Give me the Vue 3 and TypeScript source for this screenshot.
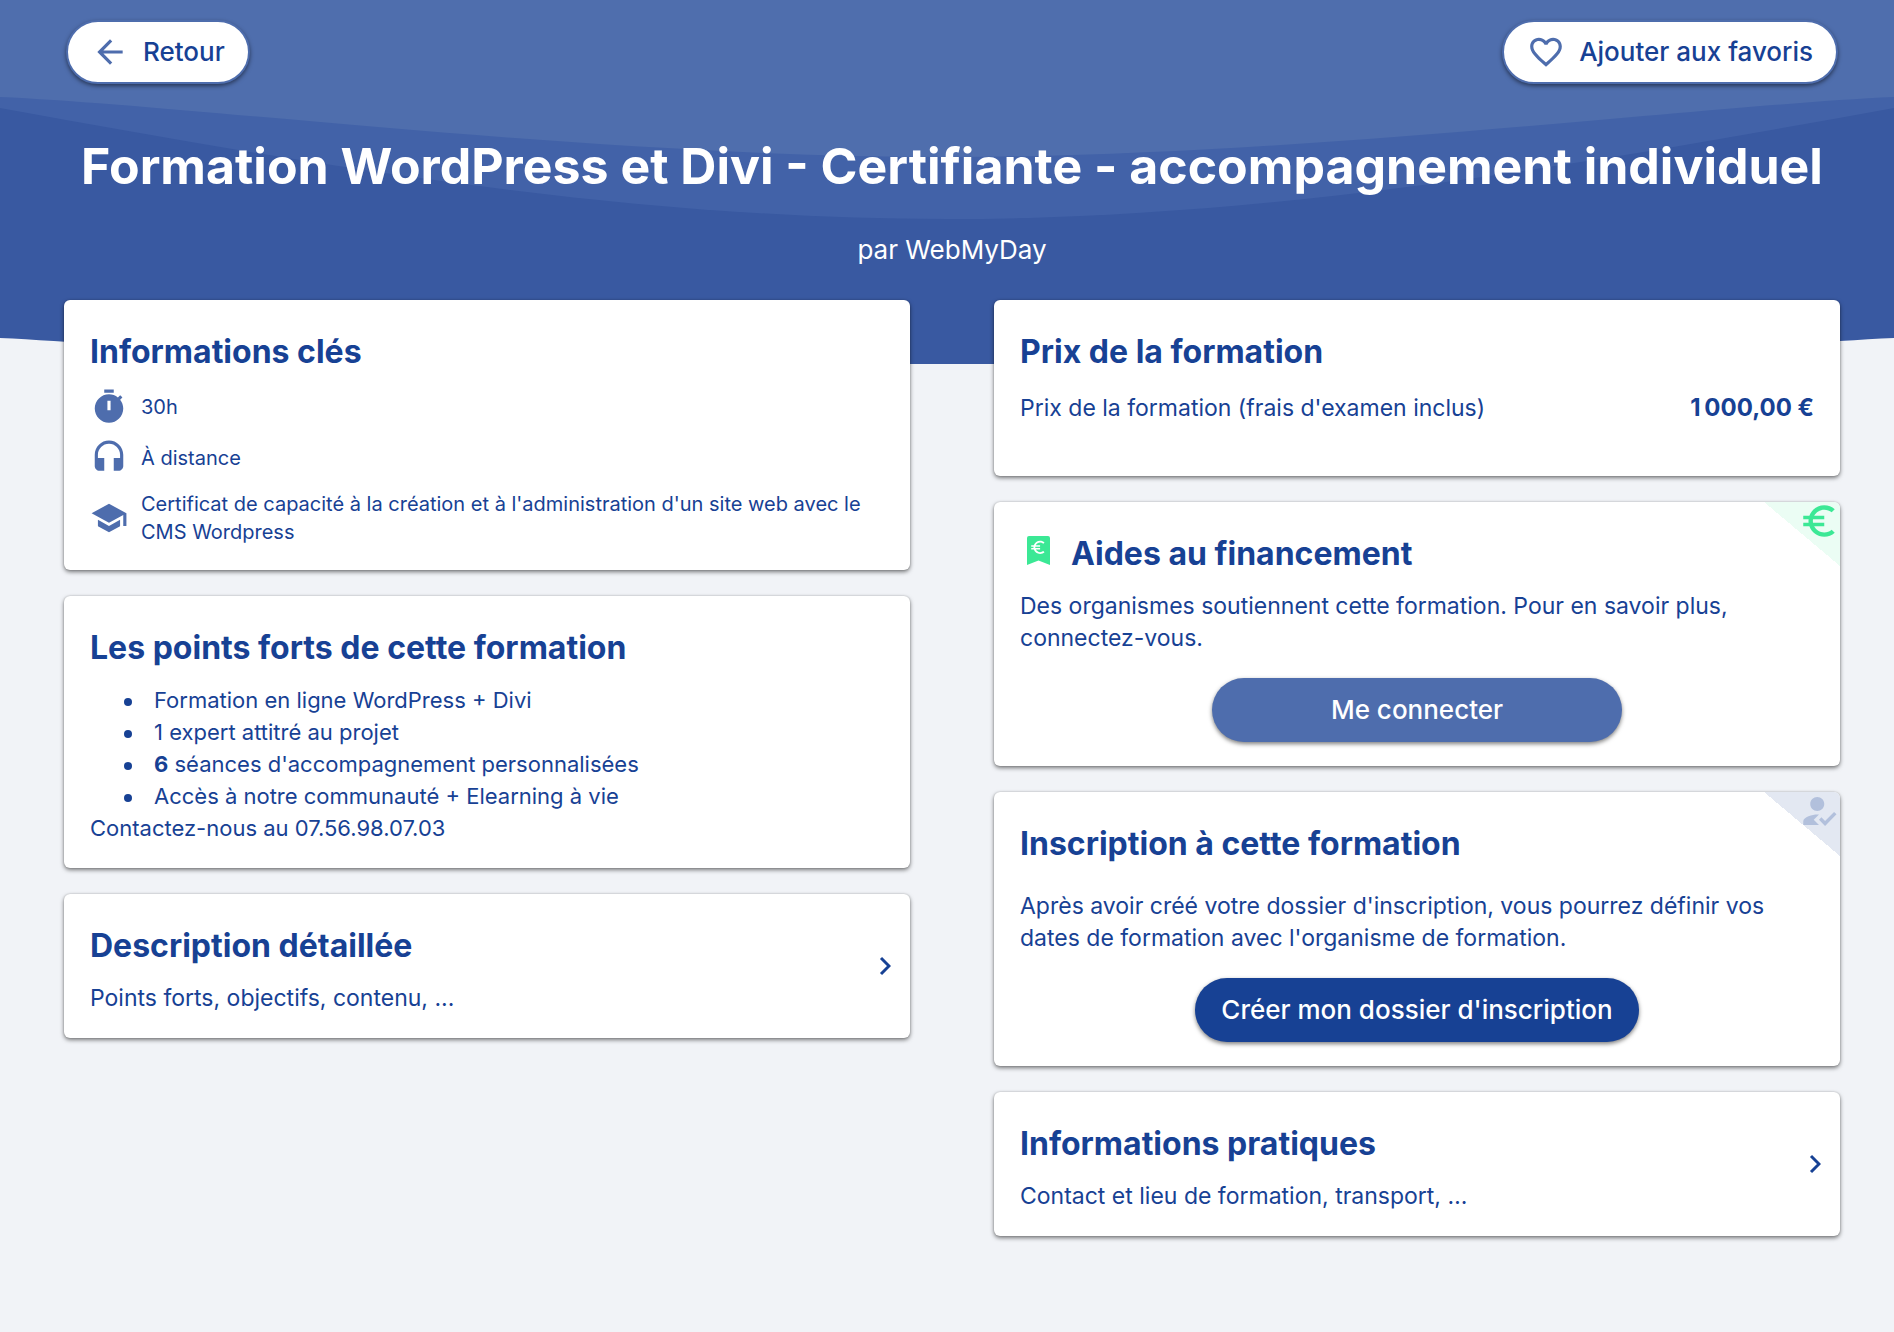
<script setup lang="ts">
const keyFacts: { icon: string; text: string }[] = [
  {
    icon: 'M15 1H9v2h6V1zm-4 13h2V8h-2v6zm8.03-6.61l1.42-1.42c-.43-.51-.9-.99-1.41-1.41l-1.42 1.42C16.07 4.74 14.12 4 12 4c-4.97 0-9 4.03-9 9s4.02 9 9 9 9-4.03 9-9c0-2.12-.74-4.07-1.97-5.61z',
    text: '30h',
  },
  {
    icon: 'M12 1c-4.97 0-9 4.03-9 9v7c0 1.66 1.34 3 3 3h3v-8H5v-2c0-3.87 3.13-7 7-7s7 3.13 7 7v2h-4v8h3c1.66 0 3-1.34 3-3v-7c0-4.97-4.03-9-9-9z',
    text: 'À distance',
  },
  {
    icon: 'M5 13.18v4L12 21l7-3.82v-4L12 17l-7-3.82zM12 3L1 9l11 6 9-4.91V17h2V9L12 3z',
    text: "Certificat de capacité à la création et à l'administration d'un site web avec le CMS Wordpress",
  },
]

const euroPath =
  'M15 18.5c-2.51 0-4.68-1.42-5.76-3.5H15v-2H8.58c-.05-.33-.08-.66-.08-1s.03-.67.08-1H15V9H9.24C10.32 6.92 12.5 5.5 15 5.5c1.61 0 3.09.59 4.23 1.57L21 5.3C19.41 3.87 17.3 3 15 3c-3.92 0-7.24 2.51-8.48 6H3v2h3.06c-.04.33-.06.66-.06 1s.02.67.06 1H3v2h3.52c1.24 3.49 4.56 6 8.48 6 2.31 0 4.41-.87 6-2.3l-1.78-1.77c-1.13.98-2.6 1.57-4.22 1.57z'
</script>

<template>
  <div class="page">
    <svg class="backdrop" viewBox="0 0 1904 364" preserveAspectRatio="none" aria-hidden="true">
      <path fill="#3959a1" d="M0 0H1904V338C1704 347 1304 398 952 398C600 398 200 347 0 338Z" />
      <path fill="#4262a8" d="M0 0H1904V108C1604 162 1284 219 952 219C620 219 300 162 0 108Z" />
      <path fill="#4f6ead" d="M0 0H1904V97C1704 106 1304 157 952 157C600 157 200 106 0 97Z" />
    </svg>

    <div class="container">
      <nav class="toolbar">
        <button type="button" class="pill outlined">
          <svg class="icon" viewBox="0 0 24 24" aria-hidden="true">
            <path d="M20 11H7.83l5.59-5.59L12 4l-8 8 8 8 1.41-1.41L7.83 13H20v-2z" />
          </svg>
          Retour
        </button>
        <button type="button" class="pill outlined">
          <svg class="icon" viewBox="0 0 24 24" aria-hidden="true">
            <path d="M16.5 3c-1.74 0-3.41.81-4.5 2.09C10.91 3.81 9.24 3 7.5 3 4.42 3 2 5.42 2 8.5c0 3.78 3.4 6.86 8.55 11.54L12 21.35l1.45-1.32C18.6 15.36 22 12.28 22 8.5 22 5.42 19.58 3 16.5 3zm-4.4 15.55l-.1.1-.1-.1C7.14 14.24 4 11.39 4 8.5 4 6.5 5.5 5 7.5 5c1.54 0 3.04.99 3.57 2.36h1.87C13.46 5.99 14.96 5 16.5 5c2 0 3.5 1.5 3.5 3.5 0 2.89-3.14 5.74-7.9 10.05z" />
          </svg>
          Ajouter aux favoris
        </button>
      </nav>

      <header class="heading">
        <h1>Formation WordPress et Divi - Certifiante - accompagnement individuel</h1>
        <p>par WebMyDay</p>
      </header>

      <main class="columns">
        <div class="column">
          <section class="card">
            <h2>Informations clés</h2>
            <ul class="facts">
              <li v-for="fact in keyFacts" :key="fact.text">
                <svg class="icon" viewBox="0 0 24 24" aria-hidden="true"><path :d="fact.icon" /></svg>
                <span>{{ fact.text }}</span>
              </li>
            </ul>
          </section>

          <section class="card">
            <h2>Les points forts de cette formation</h2>
            <div class="strengths">
              <ul class="bullets">
                <li>Formation en ligne WordPress + Divi</li>
                <li>1 expert attitré au projet</li>
                <li><strong>6</strong> séances d'accompagnement personnalisées</li>
                <li>Accès à notre communauté + Elearning à vie</li>
              </ul>
              <p>Contactez-nous au 07.56.98.07.03</p>
            </div>
          </section>

          <a class="card linked" href="#description">
            <div class="summary">
              <h2>Description détaillée</h2>
              <p>Points forts, objectifs, contenu, ...</p>
            </div>
            <svg class="chevron" viewBox="0 0 12 20" aria-hidden="true"><path d="M2 2l8 8-8 8" /></svg>
          </a>
        </div>

        <div class="column">
          <section class="card price-card">
            <h2>Prix de la formation</h2>
            <div class="price">
              <span>Prix de la formation (frais d'examen inclus)</span>
              <strong>1&#8239;000,00 €</strong>
            </div>
          </section>

          <section class="card">
            <span class="corner green">
              <svg viewBox="0 0 24 24" aria-hidden="true"><path :d="euroPath" /></svg>
            </span>
            <h2 class="with-icon">
              <svg class="icon" viewBox="0 0 38 38" aria-hidden="true">
                <path fill="#3be895" d="M9 1h19a2 2 0 0 1 2 2v27l-11.500-4.500L7 30V3a2 2 0 0 1 2-2z" />
                <path fill="#fff" transform="translate(9 3.500) scale(.74)" :d="euroPath" />
              </svg>
              Aides au financement
            </h2>
            <p>Des organismes soutiennent cette formation. Pour en savoir plus, connectez-vous.</p>
            <button type="button" class="pill action login">Me connecter</button>
          </section>

          <section class="card signup">
            <span class="corner blue">
              <svg viewBox="0 0 24 24" aria-hidden="true">
                <path d="M9 17l3-2.94c-.39-.04-.68-.06-1-.06-2.67 0-8 1.34-8 4v2h9l-3-3zm2-5c2.21 0 4-1.79 4-4s-1.79-4-4-4-4 1.79-4 4 1.79 4 4 4m4.470 8.500L12 17l1.400-1.410 2.070 2.080 5.130-5.170 1.400 1.410z" />
              </svg>
            </span>
            <h2>Inscription à cette formation</h2>
            <p>
              Après avoir créé votre dossier d'inscription, vous pourrez définir vos dates de formation
              avec l'organisme de formation.
            </p>
            <button type="button" class="pill action primary">Créer mon dossier d'inscription</button>
          </section>

          <a class="card linked" href="#infos-pratiques">
            <div class="summary">
              <h2>Informations pratiques</h2>
              <p>Contact et lieu de formation, transport, …</p>
            </div>
            <svg class="chevron" viewBox="0 0 12 20" aria-hidden="true"><path d="M2 2l8 8-8 8" /></svg>
          </a>
        </div>
      </main>
    </div>
  </div>
</template>

<style>
body {
  margin: 0;
  background: #f1f3f7;
}
</style>

<style scoped>
.page {
  position: relative;
  min-height: 100vh;
  color: #174194;
  font-family: Inter, 'Noto Sans', sans-serif;
  font-size: 23px;
  line-height: 32px;
}

.backdrop {
  position: absolute;
  top: 0;
  left: 0;
  width: 100%;
  height: 364px;
}

.container {
  position: relative;
  padding: 20px 54px 80px 64px;
}

.toolbar {
  display: flex;
  justify-content: space-between;
  padding: 0 2px;
}

.pill {
  display: flex;
  align-items: center;
  justify-content: center;
  gap: 14px;
  height: 64px;
  box-sizing: border-box;
  border: 0;
  border-radius: 32px;
  padding: 0 26px;
  font: inherit;
  font-size: 26px;
  font-weight: 500;
  white-space: nowrap;
  box-shadow: 0 2px 4px rgba(0, 0, 0, 0.5);
  cursor: pointer;
}

.pill.outlined {
  border: 2px solid #4e6dad;
  padding: 0 23px;
  background: #fff;
  color: #174194;
}

.icon {
  flex: none;
  width: 38px;
  height: 38px;
  fill: #4e6dad;
  fill-rule: evenodd;
}

.heading {
  color: #fff;
  text-align: center;
}

h1,
h2,
p,
ul {
  margin: 0;
  padding: 0;
}

h1 {
  margin-top: 48px;
  font-size: 50px;
  line-height: 68px;
}

.heading p {
  margin-top: 32px;
  margin-bottom: 32px;
  font-size: 26px;
  line-height: 36px;
}

.columns {
  display: grid;
  grid-template-columns: 1fr 1fr;
  column-gap: 84px;
  align-items: start;
}

.column {
  display: flex;
  flex-direction: column;
  gap: 26px;
}

.card {
  position: relative;
  box-sizing: border-box;
  border-radius: 6px;
  padding: 32px 26px 24px;
  background: #fff;
  box-shadow: 0 2px 4px rgba(0, 0, 0, 0.5), 0 0 2px rgba(0, 0, 0, 0.2);
}

h2 {
  margin-bottom: 16px;
  font-size: 32px;
  line-height: 40px;
}

.with-icon {
  display: flex;
  align-items: center;
  gap: 13px;
}

.facts {
  display: flex;
  flex-direction: column;
  gap: 13px;
  list-style: none;
  font-size: 20px;
  line-height: 28px;
}

.facts li {
  display: flex;
  align-items: center;
  gap: 13px;
}

.strengths {
  font-size: 22px;
}

.bullets {
  padding-left: 34px;
  list-style: none;
}

.bullets li::before {
  content: '';
  display: inline-block;
  width: 8px;
  height: 8px;
  margin-right: 22px;
  border-radius: 50%;
  background: currentColor;
  vertical-align: middle;
}

.linked {
  display: flex;
  align-items: center;
  justify-content: space-between;
  padding: 24px 19px 24px 26px;
  color: inherit;
  text-decoration: none;
}

.summary {
  padding-top: 8px;
}

.chevron {
  flex: none;
  width: 12px;
  height: 20px;
  fill: none;
  stroke: currentColor;
  stroke-width: 3;
}

.price-card {
  padding-bottom: 48px;
}

.price {
  display: flex;
  align-items: center;
  justify-content: space-between;
  line-height: 40px;
}

.price strong {
  font-size: 24px;
}

.corner {
  position: absolute;
  top: 0;
  right: 0;
  width: 76px;
  height: 64px;
  border-top-right-radius: 6px;
}

.corner svg {
  position: absolute;
  top: -2px;
  right: 0;
  width: 42px;
  height: 42px;
}

.corner.green {
  background: linear-gradient(to top right, transparent 50%, #ebfdf4 50%);
  fill: #3be895;
}

.corner.blue {
  background: linear-gradient(to top right, transparent 50%, #e3e8f2 50%);
  fill: #b2c0dc;
}

.action {
  margin: 24px auto 0;
  color: #fff;
}

.login {
  width: 410px;
  background: #4e6dad;
}

.primary {
  background: #174194;
}

.signup h2 {
  margin-bottom: 26px;
}
</style>
